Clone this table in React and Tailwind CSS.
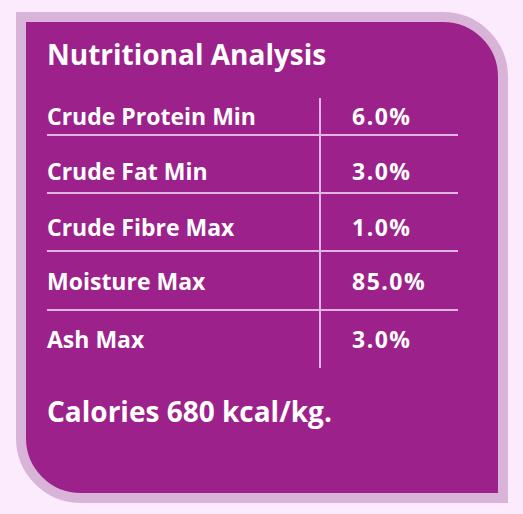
const rows = [
  { label: "Crude Protein Min", value: "6.0%", row: "h-[38px] border-b-2", pad: "" },
  { label: "Crude Fat Min", value: "3.0%", row: "h-[58px] border-b-2", pad: "pt-[14px]" },
  { label: "Crude Fibre Max", value: "1.0%", row: "h-[58px] border-b-2", pad: "pt-[10px]" },
  { label: "Moisture Max", value: "85.0%", row: "h-[59px] border-b-2", pad: "pt-[2px]" },
  { label: "Ash Max", value: "3.0%", row: "h-[57px]", pad: "" },
];

export default function App() {
  return (
    <div className="min-h-screen bg-[#fbebfc] pt-[12px] pl-[16px] font-['Open_Sans',sans-serif]">
      {/* card */}
      <div className="w-[492px] h-[491px] border-[10px] border-[#d8b4d8] rounded-tr-[65px] rounded-bl-[65px] bg-[#9d218b] text-white pt-[18px] pl-[21px] pr-[30px]">
        <h1 className="text-[28px] leading-none font-bold">Nutritional Analysis</h1>

        <div className="mt-[30px] w-[411px]">
          {rows.map((r) => (
            <div key={r.label} className={`flex border-[#e2b4e2] ${r.row}`}>
              <div className={`w-[272px] flex items-center text-[23px] font-bold ${r.pad}`}>{r.label}</div>
              <div className={`flex-1 border-l-2 border-[#e2b4e2] pl-[31px] flex items-center text-[23px] tracking-[1.5px] font-bold ${r.pad}`}>
                {r.value}
              </div>
            </div>
          ))}
        </div>

        <p className="mt-[29px] text-[28px] leading-none font-bold">Calories 680 kcal/kg.</p>
      </div>
    </div>
  );
}
